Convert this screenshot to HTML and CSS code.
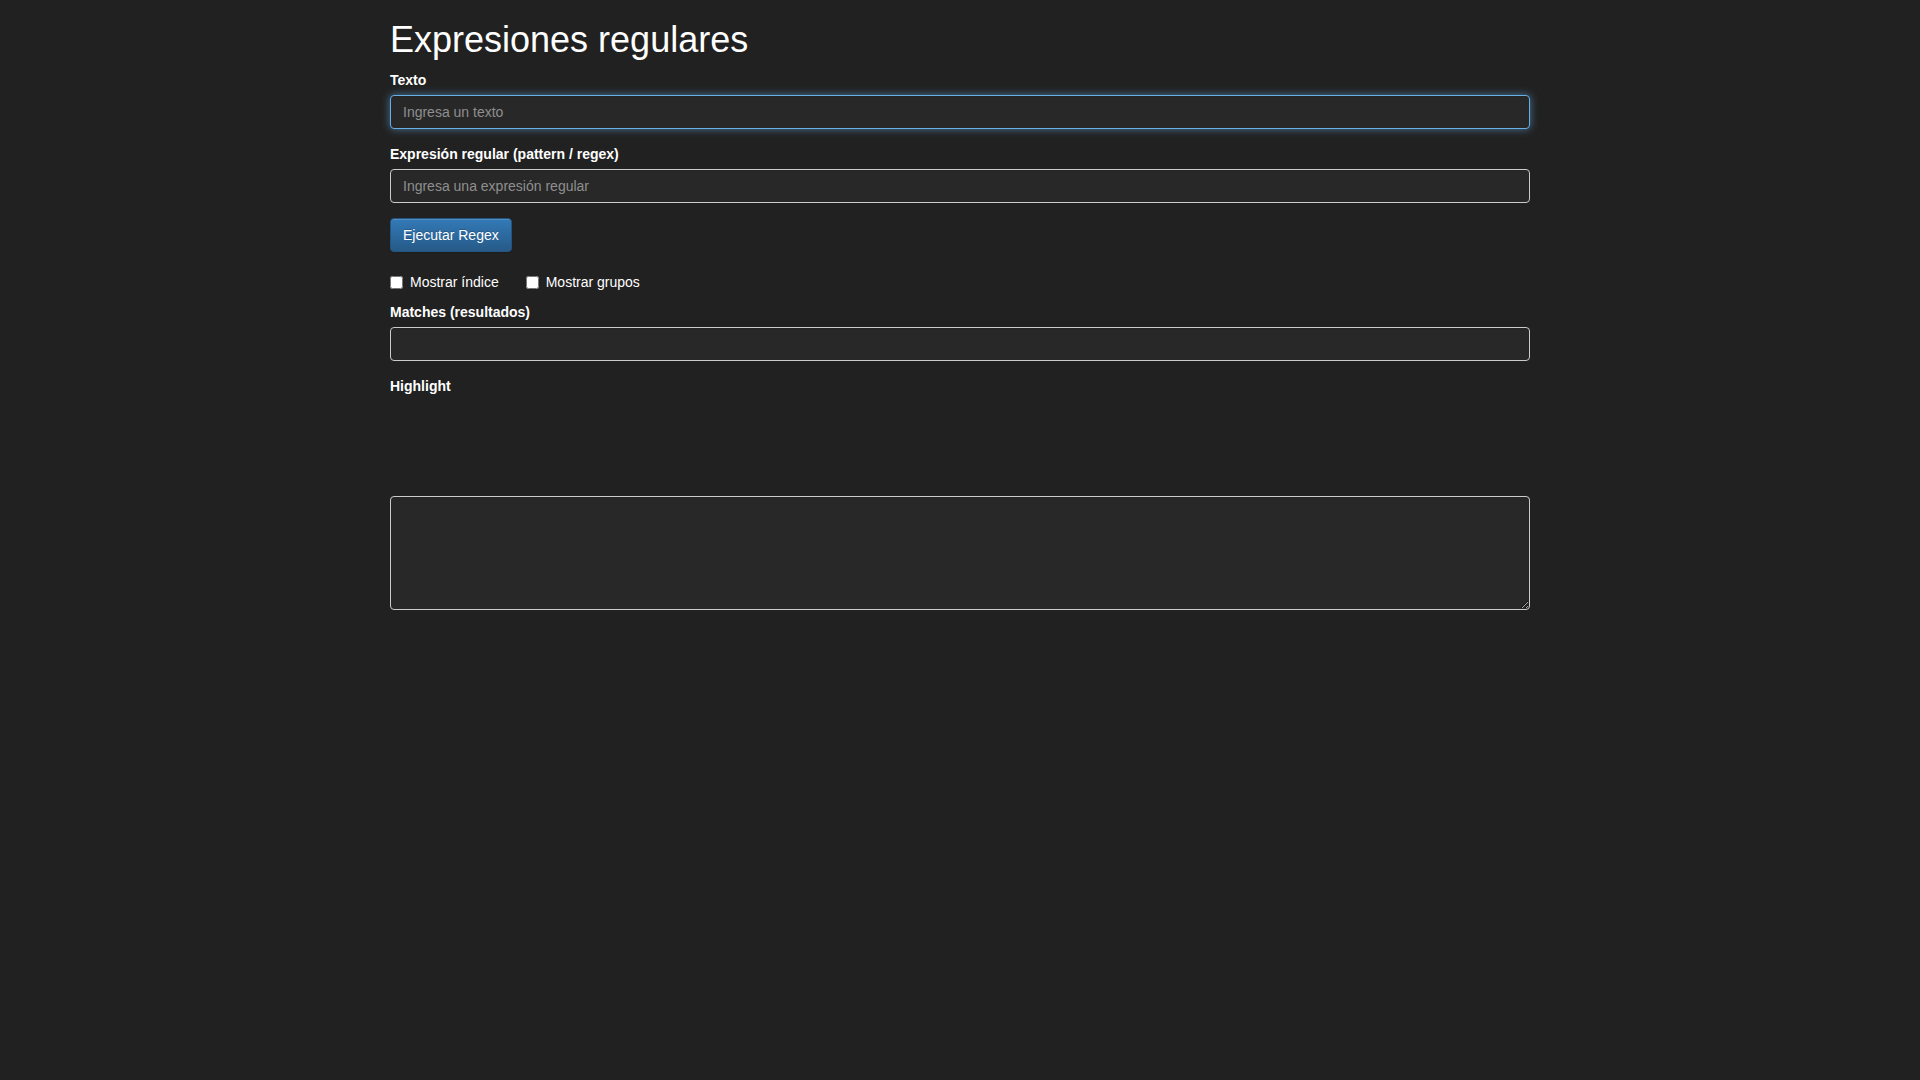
FILE: index.html
```html
<!DOCTYPE html>
<html lang="es">
<head>
<meta charset="utf-8">
<title>Expresiones regulares</title>
<link rel="stylesheet" href="styles.css">
</head>
<body>
<div class="container">
  <h1 class="title">Expresiones regulares</h1>
  <div class="form-group">
    <label class="field-label" for="texto">Texto</label>
    <input id="texto" class="form-control is-focused" type="text" placeholder="Ingresa un texto" autofocus>
  </div>
  <div class="form-group">
    <label class="field-label" for="regex">Expresión regular (pattern / regex)</label>
    <input id="regex" class="form-control" type="text" placeholder="Ingresa una expresión regular">
  </div>
  <div class="form-group button-group">
    <button class="btn-primary" type="button">Ejecutar Regex</button>
  </div>
  <div class="checks">
    <label class="check"><input type="checkbox" class="check-box"><span>Mostrar índice</span></label>
    <label class="check"><input type="checkbox" class="check-box"><span>Mostrar grupos</span></label>
  </div>
  <div class="form-group">
    <label class="field-label" for="matches">Matches (resultados)</label>
    <input id="matches" class="form-control" type="text">
  </div>
  <div class="form-group">
    <label class="field-label">Highlight</label>
    <div class="highlight"></div>
    <textarea class="form-control textarea" rows="5"></textarea>
  </div>
</div>
</body>
</html>
```

FILE: styles.css
```css
html, body {
  margin: 0;
  padding: 0;
}
body {
  background: #212121;
  color: #ffffff;
  font-family: "Liberation Sans", Arial, Helvetica, sans-serif;
  font-size: 14px;
  line-height: 1.42857143;
}
* {
  box-sizing: border-box;
}
.container {
  width: 1140px;
  margin: 0 auto;
}
.title {
  font-size: 36px;
  font-weight: 500;
  line-height: 1.1;
  margin: 20px 0 10px;
  color: #ffffff;
}
.form-group {
  margin-bottom: 15px;
}
.button-group {
  margin-bottom: 20px;
}
.field-label {
  display: inline-block;
  max-width: 100%;
  margin-bottom: 5px;
  font-weight: 700;
  color: #ffffff;
}
.form-control {
  display: block;
  width: 100%;
  height: 34px;
  padding: 6px 12px;
  font-family: inherit;
  font-size: 14px;
  line-height: 1.42857143;
  color: #ffffff;
  background: #282828;
  border: 1px solid #cccccc;
  border-radius: 4px;
  box-shadow: inset 0 1px 1px rgba(0, 0, 0, 0.075);
  outline: none;
  margin: 0;
}
.form-control::placeholder {
  color: #8f8f8f;
  opacity: 1;
}
.form-control.is-focused,
.form-control:focus {
  border-color: #66afe9;
  box-shadow: inset 0 1px 1px rgba(0, 0, 0, 0.075), 0 0 8px rgba(102, 175, 233, 0.6);
}
.textarea {
  height: auto;
  resize: vertical;
}
.highlight {
  height: 80px;
  margin-bottom: 15px;
}
.btn-primary {
  display: inline-block;
  padding: 6px 12px;
  font-family: inherit;
  font-size: 14px;
  line-height: 1.42857143;
  color: #ffffff;
  background-color: #265a88;
  background-image: linear-gradient(to bottom, #337ab7 0, #265a88 100%);
  border: 1px solid #245580;
  border-radius: 4px;
  text-shadow: 0 -1px 0 rgba(0, 0, 0, 0.2);
  box-shadow: inset 0 1px 0 rgba(255, 255, 255, 0.15), 0 1px 1px rgba(0, 0, 0, 0.075);
  cursor: pointer;
  margin: 0;
}
.checks {
  display: flex;
  gap: 27px;
  margin-bottom: 10px;
}
.check {
  display: inline-flex;
  align-items: flex-start;
  line-height: 20px;
  font-weight: 400;
  color: #ffffff;
}
.check-box {
  width: 13px;
  height: 13px;
  margin: 4px 7px 0 0;
}
```
